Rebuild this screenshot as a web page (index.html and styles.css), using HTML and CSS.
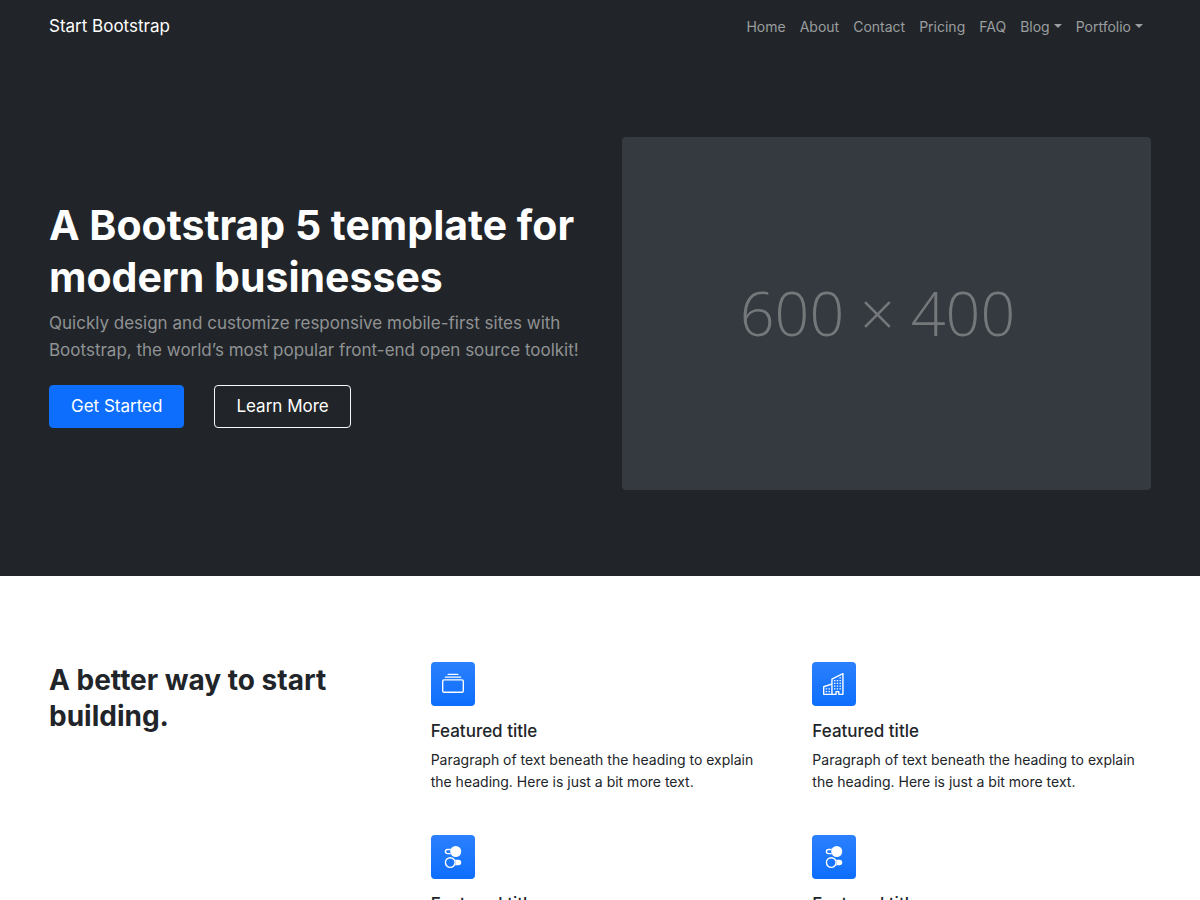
FILE: index.html
```html
<!DOCTYPE html>
<html lang="en">
<head>
<meta charset="utf-8">
<meta name="viewport" content="width=device-width, initial-scale=1">
<title>Start Bootstrap</title>
<link rel="stylesheet" href="styles.css">
</head>
<body>
<svg width="0" height="0" class="sprite" aria-hidden="true">
  <symbol id="collection" viewBox="0 0 16 16"><path d="M2.5 3.5a.5.5 0 0 1 0-1h11a.5.5 0 0 1 0 1h-11zm2-2a.5.5 0 0 1 0-1h7a.5.5 0 0 1 0 1h-7zM0 13a1.5 1.5 0 0 0 1.5 1.5h13A1.5 1.5 0 0 0 16 13V6a1.5 1.5 0 0 0-1.5-1.5h-13A1.5 1.5 0 0 0 0 6v7zm1.5.5A.5.5 0 0 1 1 13V6a.5.5 0 0 1 .5-.5h13a.5.5 0 0 1 .5.5v7a.5.5 0 0 1-.5.5h-13z"/></symbol>
  <symbol id="building" viewBox="0 0 16 16"><path fill-rule="evenodd" d="M14.763.075A.5.5 0 0 1 15 .5v15a.5.5 0 0 1-.5.5h-3a.5.5 0 0 1-.5-.5V14h-1v1.5a.5.5 0 0 1-.5.5h-9a.5.5 0 0 1-.5-.5V10a.5.5 0 0 1 .342-.474L6 7.64V4.5a.5.5 0 0 1 .276-.447l8-4a.5.5 0 0 1 .487.022zM6 8.694 1 10.36V15h5V8.694zM7 15h2v-1.5a.5.5 0 0 1 .5-.5h2a.5.5 0 0 1 .5.5V15h2V1.309l-7 3.5V15z"/><path d="M2 11h1v1H2v-1zm2 0h1v1H4v-1zm-2 2h1v1H2v-1zm2 0h1v1H4v-1zm4-4h1v1H8V9zm2 0h1v1h-1V9zm-2 2h1v1H8v-1zm2 0h1v1h-1v-1zm2-2h1v1h-1V9zm0 2h1v1h-1v-1zM8 7h1v1H8V7zm2 0h1v1h-1V7zm2 0h1v1h-1V7zM8 5h1v1H8V5zm2 0h1v1h-1V5zm2 0h1v1h-1V5zm0-2h1v1h-1V3z"/></symbol>
  <symbol id="toggles" viewBox="0 0 16 16"><path d="M9.465 10H12a2 2 0 1 1 0 4H9.465c.34-.588.535-1.271.535-2 0-.729-.195-1.412-.535-2z"/><path d="M6 15a3 3 0 1 0 0-6 3 3 0 0 0 0 6zm0 1a4 4 0 1 1 0-8 4 4 0 0 1 0 8zm.535-10a3.975 3.975 0 0 1-.409-1H4a1 1 0 0 1 0-2h2.126c.091-.355.23-.69.41-1H4a2 2 0 1 0 0 4h2.535z"/><path d="M14 4a4 4 0 1 1-8 0 4 4 0 0 1 8 0z"/></symbol>
</svg>
<header class="top">
  <nav class="container navbar">
    <a class="brand" href="#">Start Bootstrap</a>
    <ul class="nav-list">
      <li><a href="#">Home</a></li>
      <li><a href="#">About</a></li>
      <li><a href="#">Contact</a></li>
      <li><a href="#">Pricing</a></li>
      <li><a href="#">FAQ</a></li>
      <li><a class="dropdown" href="#">Blog</a></li>
      <li><a class="dropdown" href="#">Portfolio</a></li>
    </ul>
  </nav>
  <div class="container hero">
    <div class="hero-copy">
      <h1>A Bootstrap 5 template for modern businesses</h1>
      <p class="lead">Quickly design and customize responsive mobile-first sites with Bootstrap, the world’s most popular front-end open source toolkit!</p>
      <div class="actions">
        <a class="btn btn-primary" href="#features">Get Started</a>
        <a class="btn btn-outline" href="#">Learn More</a>
      </div>
    </div>
    <div class="placeholder">600 × 400</div>
  </div>
</header>
<main class="container features" id="features">
  <h2>A better way to start building.</h2>
  <div class="feature-grid">
    <section>
      <div class="feature-icon"><svg><use href="#collection"/></svg></div>
      <h3>Featured title</h3>
      <p>Paragraph of text beneath the heading to explain the heading. Here is just a bit more text.</p>
    </section>
    <section>
      <div class="feature-icon"><svg><use href="#building"/></svg></div>
      <h3>Featured title</h3>
      <p>Paragraph of text beneath the heading to explain the heading. Here is just a bit more text.</p>
    </section>
    <section>
      <div class="feature-icon"><svg><use href="#toggles"/></svg></div>
      <h3>Featured title</h3>
      <p>Paragraph of text beneath the heading to explain the heading. Here is just a bit more text.</p>
    </section>
    <section>
      <div class="feature-icon"><svg><use href="#toggles"/></svg></div>
      <h3>Featured title</h3>
      <p>Paragraph of text beneath the heading to explain the heading. Here is just a bit more text.</p>
    </section>
  </div>
</main>
</body>
</html>
```

FILE: styles.css
```css
* { box-sizing: border-box; }
body {
  margin: 0;
  font-family: Inter, "Liberation Sans", sans-serif;
  font-size: 14px;
  line-height: 22px;
  color: #212529;
  background: #fff;
}
h1, h2, h3, p, ul { margin: 0; padding: 0; }
a { text-decoration: none; }
.sprite { position: absolute; }
.container {
  width: calc(100% - 48px);
  max-width: 1102px;
  margin: 0 auto;
}
.top { background: #212529; color: #fff; }
.navbar {
  display: flex;
  align-items: baseline;
  justify-content: space-between;
  padding: 14px 0 13px;
}
.brand { color: #fff; font-size: 17px; line-height: 24px; }
.nav-list {
  display: flex;
  gap: 14px;
  padding-right: 8px;
  list-style: none;
}
.nav-list a { color: #9b9d9f; }
.dropdown::after {
  content: "";
  display: inline-block;
  margin-left: 4px;
  vertical-align: 4px;
  border-top: 4px solid;
  border-right: 4px solid transparent;
  border-left: 4px solid transparent;
}
.hero {
  display: grid;
  grid-template-columns: 533fr 529fr;
  gap: 40px;
  align-items: center;
  padding: 86px 0;
}
h1 { font-size: 41px; line-height: 52px; font-weight: 700; margin-bottom: 7px; }
.lead { font-size: 17px; line-height: 27px; color: #909294; margin-bottom: 21px; }
.actions { display: flex; gap: 30px; }
.btn {
  padding: 7px 21px;
  border: 1px solid #f8f9fa;
  border-radius: 4px;
  font-size: 17px;
  line-height: 27px;
  color: #fff;
}
.btn-primary { background: #0d6efd; border-color: #0d6efd; }
.placeholder {
  display: flex;
  align-items: center;
  justify-content: center;
  aspect-ratio: 3 / 2;
  padding-right: 18px;
  border-radius: 4px;
  background: #343a40;
  color: #75787b;
  font-family: "Open Sans", "Noto Sans", sans-serif;
  font-size: 61px;
  font-weight: 300;
}
.features {
  display: grid;
  grid-template-columns: repeat(3, 1fr);
  gap: 43px;
  padding: 86px 0;
}
h2 { font-size: 28px; line-height: 36px; font-weight: 700; }
.feature-grid {
  grid-column: span 2;
  display: grid;
  grid-template-columns: 1fr 1fr;
  gap: 42px 43px;
}
.feature-icon {
  display: grid;
  place-items: center;
  width: 44px;
  height: 44px;
  margin-bottom: 14px;
  border-radius: 4px;
  background: linear-gradient(#2b80fd, #0d6efd);
}
.feature-icon svg { width: 22px; height: 22px; fill: #fff; }
h3 { font-size: 17px; line-height: 22px; font-weight: 500; margin-bottom: 7px; }
```
